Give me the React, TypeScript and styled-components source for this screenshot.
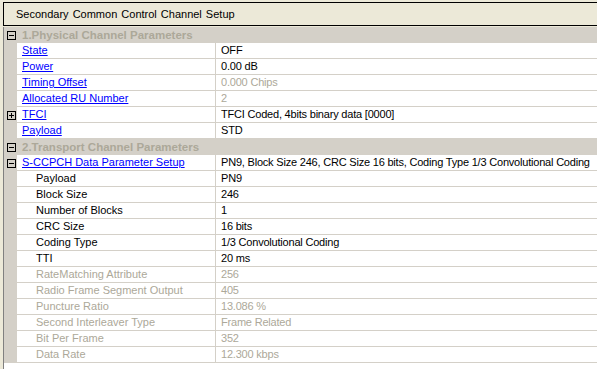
import styled, { createGlobalStyle } from 'styled-components';

const GlobalStyle = createGlobalStyle`
  html, body {
    margin: 0;
    padding: 0;
    background: #ece9d8;
    font-family: "Liberation Sans", Arial, sans-serif;
    font-size: 11px;
  }
`;

type Kind = 'link' | 'plain' | 'disabled';

interface Row {
  name: string;
  value: string;
  kind: Kind;
  child?: boolean;
  valueDisabled?: boolean;
  toggle?: '+' | '-';
}

interface Section {
  title: string;
  rows: Row[];
}

const SECTIONS: Section[] = [
  {
    title: '1.Physical Channel Parameters',
    rows: [
      { name: 'State', value: 'OFF', kind: 'link' },
      { name: 'Power', value: '0.00 dB', kind: 'link' },
      { name: 'Timing Offset', value: '0.000 Chips', kind: 'link', valueDisabled: true },
      { name: 'Allocated RU Number', value: '2', kind: 'link', valueDisabled: true },
      { name: 'TFCI', value: 'TFCI Coded, 4bits binary data [0000]', kind: 'link', toggle: '+' },
      { name: 'Payload', value: 'STD', kind: 'link' },
    ],
  },
  {
    title: '2.Transport Channel Parameters',
    rows: [
      {
        name: 'S-CCPCH Data Parameter Setup',
        value: 'PN9, Block Size 246, CRC Size 16 bits, Coding Type 1/3 Convolutional Coding',
        kind: 'link',
        toggle: '-',
      },
      { name: 'Payload', value: 'PN9', kind: 'plain', child: true },
      { name: 'Block Size', value: '246', kind: 'plain', child: true },
      { name: 'Number of Blocks', value: '1', kind: 'plain', child: true },
      { name: 'CRC Size', value: '16 bits', kind: 'plain', child: true },
      { name: 'Coding Type', value: '1/3 Convolutional Coding', kind: 'plain', child: true },
      { name: 'TTI', value: '20 ms', kind: 'plain', child: true },
      { name: 'RateMatching Attribute', value: '256', kind: 'disabled', child: true },
      { name: 'Radio Frame Segment Output', value: '405', kind: 'disabled', child: true },
      { name: 'Puncture Ratio', value: '13.086 %', kind: 'disabled', child: true },
      { name: 'Second Interleaver Type', value: 'Frame Related', kind: 'disabled', child: true },
      { name: 'Bit Per Frame', value: '352', kind: 'disabled', child: true },
      { name: 'Data Rate', value: '12.300 kbps', kind: 'disabled', child: true },
    ],
  },
];

function ToggleBox({ sign }: { sign: '+' | '-' }) {
  return (
    <StToggle width="9" height="9" viewBox="0 0 9 9">
      <rect x="0.5" y="0.5" width="8" height="8" fill="none" stroke="#000" />
      <line x1="2" y1="4.5" x2="7" y2="4.5" stroke="#000" />
      {sign === '+' && <line x1="4.5" y1="2" x2="4.5" y2="7" stroke="#000" />}
    </StToggle>
  );
}

function App() {
  return (
    <>
      <GlobalStyle />
      <StFrame>
        <StTitle>Secondary Common Control Channel Setup</StTitle>
        <StGrid>
          {SECTIONS.map((section) => (
            <div key={section.title}>
              <StSectionRow>
                <StGutter>
                  <ToggleBox sign="-" />
                </StGutter>
                <StSectionTitle>{section.title}</StSectionTitle>
              </StSectionRow>
              {section.rows.map((row) => (
                <StRow key={section.title + row.name}>
                  <StGutter>{row.toggle && <ToggleBox sign={row.toggle} />}</StGutter>
                  <StName $kind={row.kind} $child={row.child}>
                    {row.kind === 'link' ? <StLink>{row.name}</StLink> : row.name}
                  </StName>
                  <StValue $disabled={row.valueDisabled || row.kind === 'disabled'}>
                    {row.value}
                  </StValue>
                </StRow>
              ))}
            </div>
          ))}
        </StGrid>
      </StFrame>
    </>
  );
}

const StFrame = styled.div`
  display: flex;
  flex-direction: column;
  width: 597px;
  height: 369px;
  padding: 2px 0 0 3px;
  box-sizing: border-box;
  overflow: hidden;
`;
const StTitle = styled.div`
  display: flex;
  align-items: center;
  height: 22px;
  padding-left: 12px;
  border: 1px solid #000;
  border-right: none;
  background: #ece9d8;
  color: #000;
  font-size: 11px;
  word-spacing: 1px;
  white-space: nowrap;
`;
const StGrid = styled.div`
  flex: 1;
  margin-top: 1px;
  border-left: 1px solid #808080;
  background: #fff;
`;
const StRowBase = styled.div`
  display: grid;
  grid-template-columns: 13px 199px 1fr;
  height: 16px;
`;
const StSectionRow = styled(StRowBase)`
  background: #d4d0c8;
`;
const StRow = styled(StRowBase)``;
const StGutter = styled.div`
  display: flex;
  align-items: center;
  justify-content: center;
  background: #d4d0c8;
  padding-left: 1px;
`;
const StToggle = styled.svg`
  display: block;
`;
const StSectionTitle = styled.div`
  grid-column: 2 / 4;
  padding-left: 5px;
  line-height: 16px;
  font-size: 11.5px;
  font-weight: bold;
  color: #aca899;
  white-space: nowrap;
`;
const StName = styled.div<{ $kind: Kind; $child?: boolean }>`
  padding-left: ${(p) => (p.$child ? '19px' : '5px')};
  line-height: 15px;
  border-bottom: 1px solid #d4d0c8;
  border-right: 1px solid #d4d0c8;
  color: ${(p) => (p.$kind === 'disabled' ? '#aca899' : '#000')};
  white-space: nowrap;
  overflow: hidden;
`;
const StLink = styled.span`
  color: #0000ff;
  text-decoration: underline;
`;
const StValue = styled.div<{ $disabled?: boolean }>`
  padding-left: 5px;
  line-height: 15px;
  letter-spacing: -0.2px;
  border-bottom: 1px solid #d4d0c8;
  color: ${(p) => (p.$disabled ? '#aca899' : '#000')};
  white-space: nowrap;
  overflow: hidden;
`;

export default App;
